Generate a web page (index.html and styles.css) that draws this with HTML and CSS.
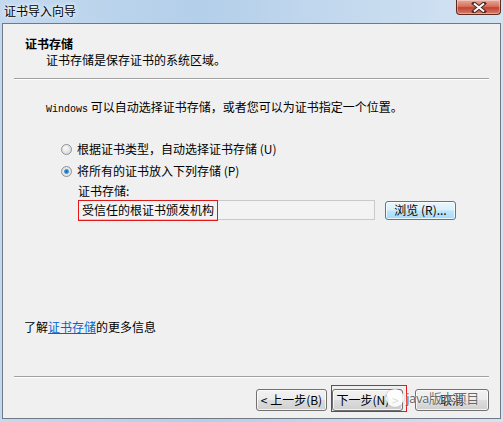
FILE: index.html
```html
<!DOCTYPE html>
<html lang="zh-CN">
<head>
<meta charset="UTF-8" />
<title>证书导入向导</title>
<link rel="stylesheet" href="styles.css">
</head>
<body>
<div class="window">
  <div class="titlebar">
    <span class="title">证书导入向导</span>
    <span class="close-btn">
      <svg width="16" height="11" viewBox="0 0 16 11"><path d="M3 1.5 L13 9.5 M13 1.5 L3 9.5" stroke="#4a2a24" stroke-width="4" stroke-linecap="square"/><path d="M3 1.5 L13 9.5 M13 1.5 L3 9.5" stroke="#fff" stroke-width="2"/></svg>
    </span>
  </div>

  <div class="client">
    <div class="header">
      <div class="header-title">证书存储</div>
      <div class="header-sub">证书存储是保存证书的系统区域。</div>
    </div>
    <div class="sep"></div>

    <div class="body">
      <div class="intro"><span class="mono">Windows</span> 可以自动选择证书存储，或者您可以为证书指定一个位置。</div>

      <div class="options">
        <div class="radio-row">
          <span class="radio"></span>
          <span>根据证书类型，自动选择证书存储 (U)</span>
        </div>
        <div class="radio-row">
          <span class="radio checked"></span>
          <span>将所有的证书放入下列存储 (P)</span>
        </div>
        <div class="store">
          <div class="store-label">证书存储:</div>
          <div class="store-row">
            <div class="store-input">
              受信任的根证书颁发机构
              <span class="mark mark-input"></span>
            </div>
            <div class="btn btn-hot">浏览 (R)...</div>
          </div>
        </div>
      </div>

      <div class="more">了解<a href="#">证书存储</a>的更多信息</div>
    </div>

    <div class="sep"></div>
    <div class="footer">
      <div class="btn btn-step">&lt; 上一步(B)</div>
      <div class="btn btn-step">下一步(N) &gt;<span class="mark mark-next"></span></div>
      <div class="btn btn-cancel">取消</div>
      <div class="watermark">
        <span class="wm-logo"></span>
        <span class="wm-text">java版本项目</span>
      </div>
    </div>
  </div>
</div>
</body>
</html>
```

FILE: styles.css
```css
* { box-sizing: border-box; }
html, body { margin: 0; padding: 0; }
body {
  font-family: "Noto Sans CJK SC", "DejaVu Sans", sans-serif;
  font-size: 12px;
  line-height: 16px;
  color: #000;
}

.window {
  width: 503px;
  height: 422px;
  display: flex;
  flex-direction: column;
  background: linear-gradient(90deg, #c3d9ef 0%, #b4cfea 40%, #c7dbef 75%, #d3e3f2 100%);
  overflow: hidden;
}

.titlebar {
  height: 23px;
  display: flex;
  justify-content: space-between;
  align-items: flex-start;
  padding-left: 4px;
  padding-right: 2px;
  flex-shrink: 0;
}
.title {
  margin-top: 3px;
  text-shadow: 0 0 6px #fff, 0 0 3px #fff;
}
.close-btn {
  width: 45px;
  height: 15px;
  border: 1px solid #5d2a22;
  border-top: none;
  border-radius: 0 0 4px 4px;
  background: linear-gradient(#e9a99a 0%, #d7715f 45%, #c3432f 55%, #d4806d 100%);
  display: flex;
  align-items: center;
  justify-content: center;
  box-shadow: inset 0 0 0 1px rgba(255,255,255,0.35);
}

.client {
  flex: 1;
  margin: 0 2px 3px 2px;
  background: #f0f0f0;
  border: 1px solid #707a84;
  display: flex;
  flex-direction: column;
}

.header {
  padding: 12px 0 10px 22px;
}
.header-title { font-weight: bold; }
.header-sub { padding-left: 21px; }

.sep {
  margin: 0 11px;
  height: 2px;
  border-top: 1px solid #a0a0a0;
  border-bottom: 1px solid #fff;
  flex-shrink: 0;
}

.body {
  flex: 1;
  display: flex;
  flex-direction: column;
  padding: 19px 0 41px 0;
}
.intro { padding-left: 43px; }
.mono { font-family: "Liberation Mono", monospace; font-size: 10px; }

.options {
  margin-top: 23px;
  padding-left: 58px;
}
.radio-row {
  display: flex;
  align-items: center;
  gap: 5px;
  margin-bottom: 6px;
}
.radio {
  width: 11px;
  height: 11px;
  border-radius: 50%;
  border: 1px solid #8f9296;
  background: radial-gradient(circle at 40% 35%, #fbfbfb 0%, #dcdcdc 70%, #cfcfcf 100%);
}
.radio.checked {
  background: radial-gradient(circle, #1b5fa8 0%, #3b8bd6 28%, #7bb8ea 38%, #e8e8e8 45%, #d8d8d8 100%);
}

.store { padding-left: 17px; }
.store-label { margin-top: -2px; }
.store-row {
  display: flex;
  align-items: center;
  gap: 10px;
  margin-top: 1px;
}
.store-input {
  position: relative;
  width: 297px;
  height: 20px;
  border: 1px solid #c9c9c9;
  background: #f3f3f3;
  padding: 1px 0 0 3px;
  font-size: 12px;
}
.mark {
  position: absolute;
  border: 1.5px solid #e41818;
  pointer-events: none;
}
.mark-input { left: -1px; top: -1px; width: 140px; height: 21px; }

.btn {
  position: relative;
  width: 73px;
  height: 22px;
  border: 1px solid #707070;
  border-radius: 3px;
  background: linear-gradient(#f2f2f2 0%, #ebebeb 48%, #dddddd 52%, #cfcfcf 100%);
  box-shadow: inset 0 0 0 1px rgba(255,255,255,0.75);
  display: flex;
  align-items: center;
  justify-content: center;
  white-space: nowrap;
}
.btn-hot {
  width: 71px;
  height: 19px;
  border-color: #3c7fb1;
  background: linear-gradient(#eaf6fd 0%, #d9f0fc 48%, #bee6fd 52%, #a7d9f5 100%);
}
.btn-step { width: 71px; }

.more {
  margin-top: auto;
  padding-left: 21px;
}
.more a { color: #0066cc; text-decoration: underline; }

.footer {
  position: relative;
  display: flex;
  justify-content: flex-end;
  gap: 5px;
  padding: 11px 11px 7px 0;
}
.btn-cancel { margin-left: 7px; width: 74px; }
.mark-next { left: -2px; top: -5px; width: 76px; height: 27px; }

.watermark {
  position: absolute;
  left: 383px;
  top: 11px;
  display: flex;
  align-items: center;
  gap: 2px;
  pointer-events: none;
}
.wm-logo {
  width: 18px;
  height: 18px;
  border-radius: 50%;
  background: rgba(255,255,255,0.85);
  box-shadow: 0 0 2px rgba(120,120,120,0.6);
}
.wm-text {
  color: rgba(60,60,60,0.75);
  font-size: 13px;
  letter-spacing: -0.5px;
  text-shadow: 0 0 2px #fff;
}
```
